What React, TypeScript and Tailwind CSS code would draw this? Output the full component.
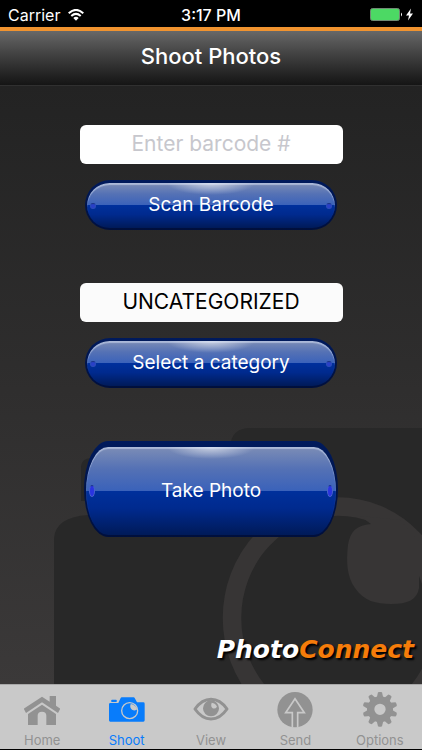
import { useState } from 'react';
import type { ReactNode } from 'react';
import { clsx } from 'clsx';

interface GlossyButtonProps {
  label: string;
  large?: boolean;
}

/**
 * Blue glass button with a rivet at each end
 */
const GlossyButton = ({ label, large = false }: GlossyButtonProps) => (
  <button
    type="button"
    className={clsx(
      'flex w-full bg-linear-to-b from-[#001a5c] to-[#000f3c] px-[2px] pb-[2px] text-[19px] text-white',
      large
        ? 'h-24 max-w-[254px] rounded-[24px/48px] pt-[6px]'
        : 'h-[50px] max-w-[252px] rounded-[25px] pt-[3px]'
    )}
  >
    <span
      className={clsx(
        'flex h-full w-full items-center justify-between bg-[radial-gradient(ellipse_44px_12px_at_50%_0,rgba(255,255,255,0.6),transparent),linear-gradient(to_bottom,#7c8db6_0%,#5471b5_25%,#3a62ba_50%,#00309c_50%,#002a8e_70%,#001a58_100%)] px-[3px] shadow-[inset_0_2px_1px_rgba(220,230,250,0.5)]',
        large ? 'rounded-[22px/44px]' : 'rounded-[23px]'
      )}
    >
      <Rivet large={large} />
      <span>{label}</span>
      <Rivet large={large} />
    </span>
  </button>
);

const Rivet = ({ large }: { large: boolean }) => (
  <span
    aria-hidden="true"
    className={clsx(
      'w-[6px] shrink-0 rounded-[50%] border',
      large
        ? 'h-[12px] border-[#4a62cc] border-t-[#1c3488] bg-[#2a34e0]'
        : 'h-[6px] border-[#2c4cb8] border-t-[#1c3488] bg-[#2a40c8]'
    )}
  />
);

/**
 * Oversized camera silhouette behind the controls
 */
const CameraWatermark = () => (
  <svg
    aria-hidden="true"
    viewBox="54 427 368 257"
    className="pointer-events-none absolute right-0 bottom-0 h-[257px] w-[368px]"
  >
    <path
      fill="#282828"
      d="M54 684V538Q56 517 88 515H94V501H81V468Q81 458 92 458H215L230 446Q232 428 250 428H422V684Z"
    />
    <ellipse cx="338" cy="618" rx="106" ry="111.500" fill="none" stroke="#373535" strokeWidth="18.500" />
    <path
      fill="#373535"
      d="M371 524C356 525 350 532 348 545C346 562 347 577 355 588C364 601 376 604 391 604C408 604 417 600 419 588V576L422 584V545L400 520L360 516Z"
    />
  </svg>
);

interface TabItem {
  label: string;
  viewBox: string;
  icon: ReactNode;
}

const TABS: TabItem[] = [
  {
    label: 'Home',
    viewBox: '72 36 108 108',
    icon: (
      <>
        <path d="M126 50L149 65V48H168V77L181 86L174 99L126 67L78 99L71 86Z" />
        <path d="M84 102L126 74L168 102V135H139V107Q139 95 126 95Q113 95 113 107V135H84Z" />
      </>
    ),
  },
  {
    label: 'Shoot',
    viewBox: '327 36 108 108',
    icon: (
      <>
        <path d="M334 66V61Q334 59 336 59H348Q350 59 350 61V66Z" />
        <path d="M331 69H355L362 54Q363 52 365 52H401Q403 52 404 54L411 67H430Q434 67 434 71V121Q434 125 430 125H331Q327 125 327 121V73Q327 69 331 69Z" />
        <circle cx="389" cy="92" r="24" fill="none" stroke="#c9c9c9" strokeWidth="4" />
        <path fill="#c9c9c9" d="M392 72Q407 74 412 88Q405 94 396 89Q388 83 392 72Z" />
      </>
    ),
  },
  {
    label: 'View',
    viewBox: '579 36 108 108',
    icon: (
      <>
        <path
          fill="none"
          stroke="currentColor"
          strokeWidth="9"
          strokeLinejoin="round"
          d="M585 87C600 66 616 58 633 58S666 66 681 87C666 109 650 117 633 117S600 109 585 87Z"
        />
        <circle cx="633" cy="85" r="24" />
        <path fill="#c9c9c9" d="M635 68Q647 69 651 80Q646 88 638 85Q631 79 635 68Z" />
      </>
    ),
  },
  {
    label: 'Send',
    viewBox: '196 36 108 108',
    icon: (
      <>
        <circle cx="250" cy="89" r="53" />
        <path
          fill="none"
          stroke="#c9c9c9"
          strokeWidth="5"
          d="M242 142V98H222L250 56L278 98H258V142"
        />
      </>
    ),
  },
  {
    label: 'Options',
    viewBox: '452 36 108 108',
    icon: (
      <>
        <circle cx="506" cy="88" r="28" fill="none" stroke="currentColor" strokeWidth="22" />
        {[0, 36, 72, 108, 144, 180, 216, 252, 288, 324].map((angle) => (
          <path
            key={angle}
            transform={`rotate(${angle} 506 88)`}
            d="M496 54L500 37Q506 34 512 37L516 54Z"
          />
        ))}
      </>
    ),
  },
];

const StatusBar = () => (
  <div className="grid h-[27px] grid-cols-3 items-center bg-black px-2 pt-[2px] text-base text-white">
    <div className="flex items-center gap-2">
      <span>Carrier</span>
      <svg aria-hidden="true" viewBox="0 0 16 12" className="h-3 w-4">
        <g fill="none" stroke="white" strokeWidth="2">
          <path d="M0.700 4.200Q8-2.400 15.300 4.200" />
          <path d="M3.300 7Q8 2.800 12.700 7" />
        </g>
        <path fill="white" d="M5.300 9Q8 6.600 10.700 9L8 11.800Z" />
      </svg>
    </div>
    <span className="text-center font-medium">3:17 PM</span>
    <div className="flex items-center justify-end">
      <svg aria-hidden="true" viewBox="0 0 44 14" className="h-[14px] w-11">
        <rect x="0.500" y="0.500" width="29" height="12" rx="2" fill="#4cd964" stroke="#6f8a73" />
        <path fill="white" d="M31 4.500Q33 6.500 31 8.500Z" />
        <path fill="white" d="M41 0.500L36 7.500H39L38 12.500L43 5.500H40Z" />
      </svg>
    </div>
  </div>
);

const App = () => {
  const [barcode, setBarcode] = useState('');
  const [activeTab, setActiveTab] = useState('Shoot');

  return (
    <div className="flex min-h-screen flex-col bg-black font-['Inter','Liberation_Sans',sans-serif]">
      <StatusBar />

      <header className="flex h-[58px] items-center justify-center border-t-4 border-[#f0932f] bg-linear-to-b from-[#686868] to-[#151515] pb-[4px]">
        <h1 className="text-[22px] font-medium text-white">Shoot Photos</h1>
      </header>

      <main className="relative flex flex-1 flex-col items-center border-t border-[#303030] bg-linear-to-b from-[#232323] to-[#3b3939] px-4 pt-[39px]">
        <CameraWatermark />

        <form
          className="relative flex w-full flex-1 flex-col items-center"
          onSubmit={(event) => event.preventDefault()}
        >
          <input
            type="text"
            aria-label="Barcode"
            placeholder="Enter barcode #"
            value={barcode}
            onChange={(event) => setBarcode(event.target.value)}
            className="mb-4 h-[39px] w-full max-w-[263px] rounded-md bg-white pb-[2px] text-center text-[21px] text-black placeholder:text-[#c7c7cd]"
          />
          <GlossyButton label="Scan Barcode" />

          <input
            type="text"
            aria-label="Category"
            readOnly
            value="UNCATEGORIZED"
            className="mt-[53px] mb-4 h-[39px] w-full max-w-[263px] rounded-md bg-[#fbfbfb] pb-[2px] text-center text-[21px] text-black"
          />
          <GlossyButton label="Select a category" />

          <div className="mt-[53px] flex w-full justify-center">
            <GlossyButton label="Take Photo" large />
          </div>
        </form>

        <p className="relative -mr-2 self-end pb-4 font-['DejaVu_Sans',sans-serif] text-[25px] leading-9 font-bold italic text-white [text-shadow:2px_2px_2px_black]">
          Photo<span className="text-[#f57c0a]">Connect</span>
        </p>
      </main>

      <nav className="mb-px flex h-[65px] border-t border-[#a8a8a8] bg-[#c9c9c9]">
        {TABS.map((tab) => (
          <button
            key={tab.label}
            type="button"
            onClick={() => setActiveTab(tab.label)}
            className={clsx(
              'flex flex-1 flex-col items-center pt-[7px]',
              activeTab === tab.label ? 'text-[#087cfb]' : 'text-[#929292]'
            )}
          >
            <svg aria-hidden="true" viewBox={tab.viewBox} fill="currentColor" className="size-9">
              {tab.icon}
            </svg>
            <span className="pt-1 text-[13px] leading-4">{tab.label}</span>
          </button>
        ))}
      </nav>
    </div>
  );
};

export default App;
